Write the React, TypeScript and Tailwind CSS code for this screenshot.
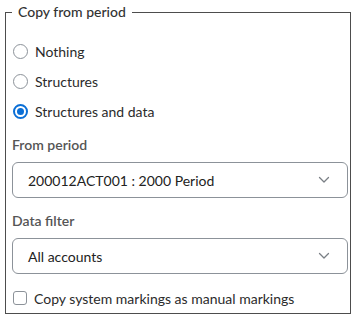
import React from 'react';

const options = ['Nothing', 'Structures', 'Structures and data'];

const Chevron = () => (
  <svg width="12" height="8" viewBox="0 0 12 8" className="shrink-0">
    <path d="M1.5 1.5 L6 6 L10.5 1.5" fill="none" stroke="#7a7f85" strokeWidth="1.3" strokeLinecap="round" strokeLinejoin="round" />
  </svg>
);

const Radio = ({ checked }: { checked: boolean }) =>
  checked ? (
    <span className="flex h-[15px] w-[15px] shrink-0 items-center justify-center rounded-full border-2 border-[#0b6fd6] bg-white">
      <span className="h-[7px] w-[7px] rounded-full bg-[#0b6fd6]" />
    </span>
  ) : (
    <span className="h-[15px] w-[15px] shrink-0 rounded-full border border-[#8c9299] bg-white" />
  );

const Select = ({ value }: { value: string }) => (
  <div className="flex h-[36px] items-center justify-between rounded-[6px] border border-[#8c9299] bg-white pl-[15px] pr-[17px] text-[14px] text-[#222]">
    <span>{value}</span>
    <Chevron />
  </div>
);

export default function App() {
  const selected = 2;

  return (
    <div className="min-h-screen bg-white font-['Lato',sans-serif] text-[14px] text-[#2b2b2b]">
      <fieldset className="ml-[5px] w-[346px] border border-[#4d4d4d] pb-[3px] pl-[6px] pr-[2px]">
        <legend className="px-[6px] leading-[24px] font-medium text-[#333]">Copy from period</legend>

        <div className="pt-[12px]">
          {options.map((opt, i) => (
            <div key={opt} className="flex h-[30px] items-center gap-[7px] pl-[1px]">
              <Radio checked={i === selected} />
              <span>{opt}</span>
            </div>
          ))}
        </div>

        <div className="mt-[9px] mb-[7px] leading-[20px] font-semibold text-[#555]">From period</div>
        <Select value="200012ACT001 : 2000 Period" />

        <div className="mt-[13px] mb-[7px] leading-[20px] font-semibold text-[#555]">Data filter</div>
        <Select value="All accounts" />

        <div className="mt-[12px] flex h-[24px] items-center gap-[7px] pl-[1px]">
          <span className="h-[14px] w-[14px] shrink-0 rounded-[3px] border border-[#8c9299] bg-white" />
          <span>Copy system markings as manual markings</span>
        </div>
      </fieldset>
    </div>
  );
}
